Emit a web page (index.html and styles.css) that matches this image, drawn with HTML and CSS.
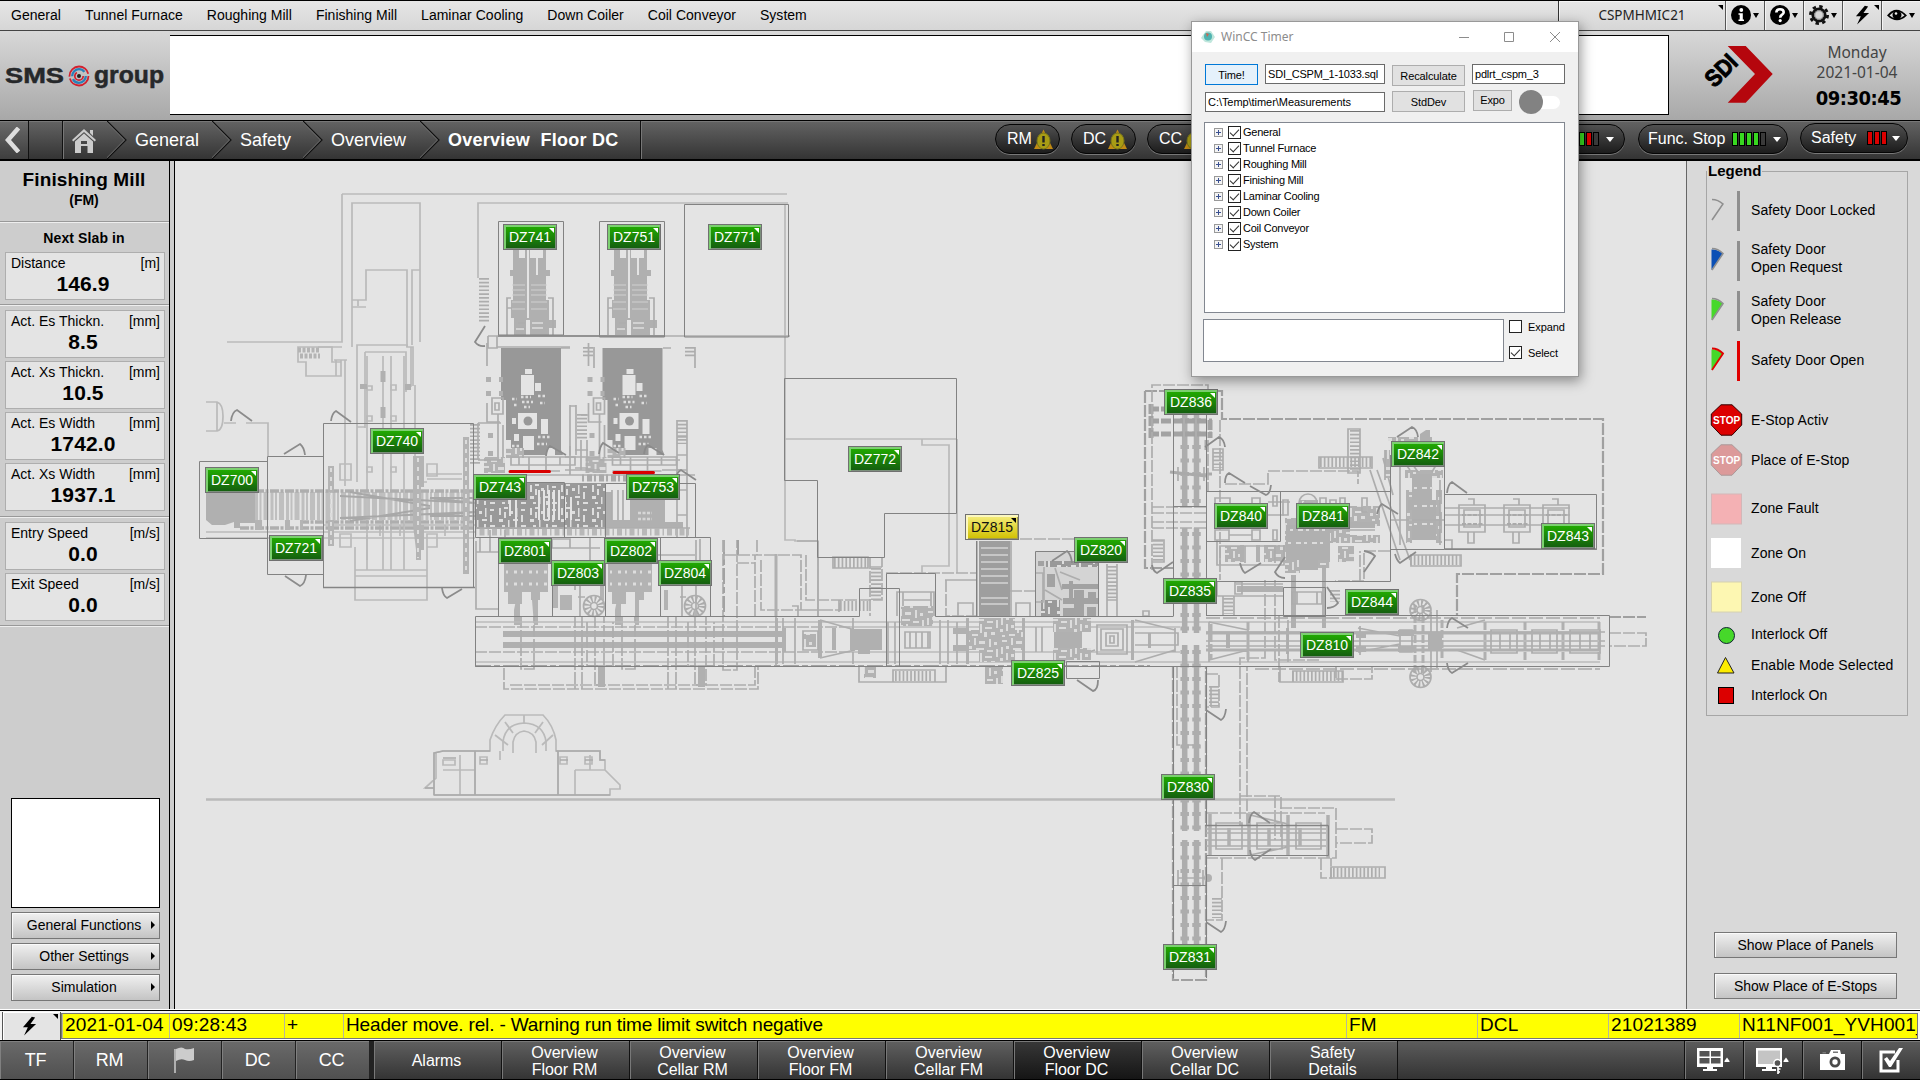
FILE: index.html
```html
<!DOCTYPE html>
<html lang="en">
<head>
<meta charset="utf-8">
<title>Overview Floor DC</title>
<link rel="stylesheet" href="styles.css">
</head>
<body>
<svg class="defs" width="0" height="0" aria-hidden="true">
  <defs>
    <symbol id="bolt" viewBox="0 0 16 20"><path d="M10.500 0L1 11.300H6.200L2.200 20L15 7.800H9L14 .8Z"/></symbol>
    <symbol id="tri-warn" viewBox="0 0 19 21"><path d="M9.500 .5L19 20H0Z" fill="#c08a14"/><ellipse cx="9.500" cy="12" rx="6.500" ry="8" fill="#a89c14" stroke="#77741a"/><path d="M9.500 7V13.500M9.500 15V17" stroke="#222" stroke-width="2.400"/></symbol>
  </defs>
</svg>
<div class="screen">
  <nav class="menubar">
    <div class="menu">
      <span>General</span><span>Tunnel Furnace</span><span>Roughing Mill</span><span>Finishing Mill</span><span>Laminar Cooling</span><span>Down Coiler</span><span>Coil Conveyor</span><span>System</span>
    </div>
    <div class="tools">
      <div class="tool host">CSPMHMIC21<i class="corner"></i></div>
      <div class="tool"><svg width="20" height="20" viewBox="0 0 20 20"><circle cx="10" cy="10" r="10"/><circle cx="10.300" cy="5" r="1.900" fill="#fff"/><path d="M7.500 8.200H11.800V14.500H13V16H7.500V14.500H8.700V9.700H7.500Z" fill="#fff"/></svg><i class="caret"></i></div>
      <div class="tool"><svg width="20" height="20" viewBox="0 0 20 20"><circle cx="10" cy="10" r="10"/><path d="M6.300 7.500Q6.500 4.300 10 4.300Q13.700 4.300 13.700 7.300Q13.700 9 11.700 10Q10.200 10.800 10.200 12.800" fill="none" stroke="#fff" stroke-width="2.600"/><circle cx="10.200" cy="15.600" r="1.600" fill="#fff"/></svg><i class="caret"></i></div>
      <div class="tool"><svg width="20" height="20" viewBox="0 0 20 20"><circle cx="10" cy="10" r="8.600" fill="none" stroke="#111" stroke-width="2.800" stroke-dasharray="3.400 3.350"/><circle cx="10" cy="10" r="6.200" fill="#d6d6d6" stroke="#111" stroke-width="2.800"/><circle cx="10" cy="10" r="4.300" fill="none" stroke="#888" stroke-width="1"/></svg><i class="caret"></i></div>
      <div class="tool"><svg class="ic" width="15" height="20"><use href="#bolt"/></svg><i class="corner"></i></div>
      <div class="tool"><svg width="20" height="14" viewBox="0 0 20 14"><path d="M0 7.500Q9 -4 20 7.500Q10 17 0 7.500Z"/><path d="M2.500 7.500Q10 -.5 17.500 7.500Q10 14 2.500 7.500Z" fill="#e0e0e0"/><circle cx="10" cy="7" r="4.500"/><circle cx="9" cy="5.500" r="1.300" fill="#eee"/></svg><i class="caret"></i></div>
    </div>
  </nav>

  <header class="head">
    <div class="brand">
      <svg width="168" height="40" viewBox="0 0 168 40">
        <g font-family="Liberation Sans" font-weight="bold" fill="#26282a" stroke="#26282a" stroke-width=".5"><text x="5" y="29" font-size="22" textLength="59" lengthAdjust="spacingAndGlyphs">SMS</text><text x="94" y="29" font-size="23.500" textLength="70" lengthAdjust="spacingAndGlyphs">group</text></g>
        <g fill="none"><circle cx="79" cy="22" r="9.500" stroke="#d3202e" stroke-width="1.800" stroke-dasharray="27 2 28 2.700"/><circle cx="79" cy="22" r="6.800" stroke="#2a80b8" stroke-width="2.300" stroke-dasharray="18 3 17 5"/><circle cx="79" cy="22" r="4.200" stroke="#d3202e" stroke-width="1.700" stroke-dasharray="17 9"/></g><circle cx="79" cy="22" r="2" fill="#222"/>
      </svg>
    </div>
    <div class="message"></div>
    <div class="customer">
      <svg width="110" height="80" viewBox="1690 35 110 80">
        <path d="M1727.700 46H1745.700L1772.700 74L1745.700 102.700H1727.700L1755 74Z" fill="#b5060d"/>
        <text transform="translate(1714.500 88.500) rotate(-45)" font-family="Liberation Sans" font-weight="bold" font-size="24" stroke="#000" stroke-width="1" textLength="35" lengthAdjust="spacingAndGlyphs">SDI</text>
      </svg>
    </div>
    <div class="clock"><span>Monday</span><span>2021-01-04</span><b>09:30:45</b></div>
  </header>

  <div class="crumbs">
    <div class="back"><svg width="16" height="26" viewBox="0 0 16 26"><path d="M14.500 1L4 13L14.500 25" fill="none" stroke="#ddd" stroke-width="4.500"/></svg></div>
    <div class="fwd"></div>
    <div class="crumb home"><svg width="26" height="26" viewBox="0 0 26 26" fill="#ccc"><path d="M1 12L13 1L25 12L23.700 13.500L13 4L2.300 13.500Z"/><path d="M19 2H22V8L19 5Z"/><path d="M4 13.500L13 5.500L22 13.500V25H16.500V18H10V25H4ZM10 13V16H16V13Z" fill-rule="evenodd"/></svg><svg class="sep" width="21" height="38"><path d="M0 0L19 19L0 38"/></svg></div>
    <div class="crumb c1">General<svg class="sep" width="21" height="38"><path d="M0 0L19 19L0 38"/></svg></div>
    <div class="crumb c2">Safety<svg class="sep" width="21" height="38"><path d="M0 0L19 19L0 38"/></svg></div>
    <div class="crumb c3">Overview<svg class="sep" width="21" height="38"><path d="M0 0L19 19L0 38"/></svg></div>
    <div class="crumb here">Overview&nbsp; Floor DC</div>
    <div class="pills">
      <div class="pill area">RM<svg width="19" height="21"><use href="#tri-warn"/></svg></div>
      <div class="pill area">DC<svg width="19" height="21"><use href="#tri-warn"/></svg></div>
      <div class="pill area">CC<svg width="19" height="21"><use href="#tri-warn"/></svg></div>
      <div class="pill estop"><span class="lamps"><i class="r"></i><i class="g"></i><i class="r"></i><i></i></span><i class="caret w"></i></div>
      <div class="pill func">Func. Stop<span class="lamps"><i class="g"></i><i class="g"></i><i class="g"></i><i class="g"></i><i></i></span><i class="caret w"></i></div>
      <div class="pill safe">Safety<span class="lamps"><i class="r"></i><i class="r"></i><i class="r"></i></span><i class="caret w"></i></div>
    </div>
  </div>

  <main class="main">
    <aside class="side">
      <div class="unit"><b>Finishing Mill</b><small>(FM)</small></div>
      <section class="grp first">
        <h3>Next Slab in</h3>
        <div class="val"><p><span>Distance</span><span>[m]</span></p><b>146.9</b></div>
      </section>
      <section class="grp tight">
        <div class="val"><p><span>Act. Es Thickn.</span><span>[mm]</span></p><b>8.5</b></div>
        <div class="val"><p><span>Act. Xs Thickn.</span><span>[mm]</span></p><b>10.5</b></div>
        <div class="val"><p><span>Act. Es Width</span><span>[mm]</span></p><b>1742.0</b></div>
        <div class="val"><p><span>Act. Xs Width</span><span>[mm]</span></p><b>1937.1</b></div>
      </section>
      <section class="grp last">
        <div class="val"><p><span>Entry Speed</span><span>[m/s]</span></p><b>0.0</b></div>
        <div class="val"><p><span>Exit Speed</span><span>[m/s]</span></p><b>0.0</b></div>
      </section>
      <div class="sidefoot">
        <div class="preview"></div>
        <div class="btn">General Functions<i class="rt"></i></div>
        <div class="btn">Other Settings<i class="rt"></i></div>
        <div class="btn">Simulation<i class="rt"></i></div>
      </div>
    </aside>

    <div class="plan">
      <svg class="floor" width="1511" height="848" viewBox="175 161 1511 848">
        <defs>
          <pattern id="mesh" width="37" height="29" patternUnits="userSpaceOnUse"><rect width="37" height="29" fill="#b2b2b2"/><path d="M3 2H8V4H3ZM12 0H14V7H12ZM17 3H23V6H17ZM27 1H29V9H27ZM32 4H35V7H32ZM2 9H4V16H2ZM7 8H10V11H7ZM14 10H22V12H14ZM25 12H31V14H25ZM34 11H36V19H34ZM7 15H9V22H7ZM12 16H15V19H12ZM18 15H20V24H18ZM23 18H30V20H23ZM1 20H4V23H1ZM10 25H16V27H10ZM22 23H25V28H22ZM29 23H33V26H29ZM3 26H6V28H3Z" fill="#dcdcdc"/></pattern>
          <pattern id="meshd" width="31" height="23" patternUnits="userSpaceOnUse"><rect width="31" height="23" fill="#999"/><path d="M3 2H5V9H3ZM8 1H12V3H8ZM8 6H10V12H8ZM14 5H17V8H14ZM20 2H21.500V11H20ZM25 3H29V5H25ZM3 13H7V16H3ZM12 14H13.500V21H12ZM17 13H22V15H17ZM25 9H27V16H25ZM6 19H9V21H6ZM19 18H21V22H19ZM25 19H30V21H25Z" fill="#dedede"/></pattern>
          <g id="stand">
            <path class="f" d="M513 250V270H510V276H513V300H511V318H514V335H526V320H530V335H549V328H556V320H549V300H546V276H550V270H546V250H543V258H530V250H525V258H519V250Z"/>
            <path d="M512 285H525M531 285H547M512 290H525M531 290H547M512 295H525M531 295H547M512 302H525M531 302H547M512 309H525M531 309H547" stroke="#d0d0d0" stroke-width="1.200"/><path d="M528 250V318M537 252V275" stroke="#e4e4e4" stroke-width="2"/>
            <path class="m" d="M507 335V298H511M553 335V298H548M507 308H512M518 328H525M518 323H525"/><path d="M532 323H543M532 328H543M516 329H524" stroke="#ddd" stroke-width="1.500"/>
          </g>
          <g id="motor">
            <path class="d" d="M501 348H561V380H561V450L563 455H555V448H547V455H511V440H506V400H501Z"/>
            <path d="M521 375H534V395H521ZM525 369H532V374H525ZM535 383H541V391H535ZM518 413H537V429H518ZM541 419H548V434H541ZM523 436H534V450H523ZM512 418H516V424H512ZM514 434H519V441H514Z" fill="#e4e4e4"/>
            <path d="M512 399H517M521 397H531M538 396H546M514 405H518M522 402H533M524 407H530M540 403H545M538 437H550M512 446H521M537 444H547" stroke="#ddd" stroke-width="2.500" stroke-dasharray="2.500 2"/>
            <circle class="d" cx="528" cy="421" r="4.500"/>
            <path class="f" d="M486 377H491V382H486ZM499 377H503V382H499ZM486 391H491V396H486ZM499 391H503V396H499ZM488 433H493V438H488ZM488 451H493V456H488Z"/>
            <path class="m" d="M492 398H503V414H492ZM495 403H499V410H495ZM487 343V366M498 414V470M503 425V470M487 403V422H500"/>
            <path d="M484 457H505V473H484ZM506 448H524V458H506Z" fill="url(#mesh)"/><path class="m" d="M511 457H575V465H511ZM519 457V465M529 457V471M546 457V471M560 457V465M511 471H560"/>
          </g>
          <g id="rollbox"><path class="m" d="M0 0H26V27H0ZM5 5H21V22H5ZM9 -6H15V0M9 27V38H15V27"/><path d="M3 10H24M3 19H24" stroke="#aaa" stroke-width="2" stroke-dasharray="4 1.500"/></g>
          <g id="spiral"><circle class="m" r="10.500"/><circle r="7" fill="none" stroke="#ababab" stroke-width="6" stroke-dasharray="1.700 2"/><circle class="m" r="3.500"/></g>
        </defs>

        <!-- building walls -->
        <g class="l">
          <path d="M342 194H787M342 194V342H227M352 347V203H420V342M352 306V300H366V270H407V347M412 345V270H420M352 300V307H366M358 300V306M342 347H318M478 278V203H788M785 204V540H795V541H818V616M785 439H957M922 439V445H949V566H922V573M957 439V573"/>
          <path d="M318 347H332V362H341V376H336V360H347M336 360H341V376H306V362H298V347H318M334 360H345V486M357 482V345H407V347H413V386M365 352H406V392M365 352V428M367 356V560M383 356V570M391 356V570M404 356V570M357 427H365M411 347V386H406M415 385V423M415 423V482H427"/>
          <path d="M206 402H217Q223 404 223 416Q223 430 217 431H206M217 402V431M224 423H236M246 423H268V456"/>
          <path d="M355 547V600H427V547M355 570H427M355 576H427M367 570V535M340 464H351V480H340ZM340 534H351V547H340ZM427 464H437V476H427ZM427 534H437V547H427ZM427 474H462M427 479H462M372 386H367V390H372ZM391 385H396V390H391ZM391 416H396V421H391ZM372 416H367V421H372ZM367 467H372V472H367ZM391 467H396V472H391Z"/>
          <path d="M206 532H475M206 538H475M323 525H475M380 525V536M400 525V536M420 525V536M445 525V536"/>
          <path d="M206 799.500H1395" stroke-width="2.500"/>
          <path d="M434 795V753L443 751H490V740Q495 725 505 715H543Q553 725 556 740V751H600V760H605V770L620 785V789H610V795ZM436 752V778L425 788H434M503 751V742Q505 724 524 723Q544 724 546 742V751M513 753V742Q515 732 524 731Q534 732 536 742V753M443 770H475M460 755V795M475 751V795M500 760V751M558 751V795M575 770V795M575 770H605M590 755V770M443 760H455V765H443ZM480 757H487V764H480ZM560 757H567V764H560ZM585 757H592V764H585Z"/>
          <path d="M495 735L508 745M505 722L513 733M524 715V723M543 722L535 733M553 735L542 745" stroke-width="1.800"/>
        </g>
        <path d="M434 795V753L443 751H490M556 751H600V760H605M425 788H434M443 758H456M480 760H488M560 760H568M585 760H593M434 795H610M475 751V795M558 751V795" stroke="#aaa" stroke-width="1.500" fill="none"/>
        <path d="M298 350H320M300 356H320" stroke="#b4b4b4" stroke-width="5" stroke-dasharray="3 1.500"/><path d="M383 371V382M383 407V418" stroke="#b0b0b0" stroke-width="5"/><path class="f" d="M360 384H367V389H360ZM405 384H411V390H405Z"/>

        <!-- entry roller table -->
        <path class="f" d="M206 492H255V523H240V528H234V522L225 525H212L206 520Z"/>
        <path d="M255 506H475" stroke="#bfbfbf" stroke-width="28" stroke-dasharray="3 1.500 2 2 5 2"/>
        <path d="M255 491H475M300 522H475M240 528H475" stroke="#aeaeae" stroke-width="3.500" stroke-dasharray="9 1.500 3 1.500"/>
        <path d="M340 496L475 503L430 498H475M340 518L475 512L430 516H475M350 492L430 506M350 521L430 508" fill="none" stroke="#a8a8a8" stroke-width="2"/>
        <path d="M413 456H424V487H413ZM413 487H421V525H413ZM413 525H424V550H421V560H416V550ZM463 437H469V490H463ZM463 490H469V523H463ZM463 523H469V574H463ZM328 466H334V492H328ZM328 520H334V546H328ZM255 520H262V530H255ZM285 520H290V530H285ZM300 520H303V530H300Z" fill="#b4b4b4"/>
        <path d="M418 458V558M466 440V572M331 468V545" stroke="#dcdcdc" stroke-width="2" stroke-dasharray="4 5"/>

        <!-- drives and mill stands -->
        <use href="#stand"/><use href="#stand" x="101"/>
        <use href="#motor"/><use href="#motor" x="101.500"/>
        <path d="M484 278V323" class="stair"/><path d="M588 347V358M690 347V358" class="stair"/>
        <path d="M682 420V444" class="stair"/><path class="m" d="M570 405V455M576 405V455M570 406H576M581 415H588M677 420V538M687 420V538M677 437H687M677 455H687M677 470H687M677 490H687M677 515H687M581 440V470M587 440V470M575 450H588M575 468H588M594 347V368M695 347V368M561 348H570M663 348H671"/>
        <path d="M582 414V440M475 424V465" class="stair"/>
        <path class="m" d="M478 423H501M478 423V460M475 475H695M475 482H505M488 336H790M497 347H570M488 336V348H497V336M565 470H600M662 470H680M478 460H500M565 457H600M600 460H680M570 446V475"/>
        <path d="M582 478H628M475 478H500M645 478H675" stroke="#aaa" stroke-width="7" stroke-dasharray="2 3 5 2"/>
        <rect x="475" y="483" width="130" height="46" fill="url(#meshd)"/>
        <path d="M510 487V516M516 487V525M539 490V520M544 490V520M549 490V520M554 490V520M559 490V520M565 497V520M571 497V520" stroke="#e4e4e4" stroke-width="2"/>
        <path class="f" d="M635 500H665V522H683V528H605V492H612V520H630V500Z"/><path class="m" d="M612 490V520M618 490V520M623 490V520"/><path d="M638 513H652M638 519H652" stroke="#d6d6d6" stroke-width="2.500" stroke-dasharray="3 1.500"/>
        <path d="M475 532H690" stroke="#b8b8b8" stroke-width="7" stroke-dasharray="1.500 3 5 3"/>
        <path class="m" d="M475 528H690M480 537V552H498M490 530V552M505 530V538M476 541V609H498M476 552H498M552 539H570V548H552ZM552 548H600M590 537V560M640 555H695M700 539V560M696 540V616"/>
        <g fill="#b3b3b3"><path d="M504 563H548V592H540V600H531V592H522V604H508V592H504ZM608 563H652V592H644V600H635V592H626V604H612V592H608ZM560 595H572V610H560ZM553 563H558V608H553ZM664 590H668V610H664ZM600 563H604V600H600Z"/><path d="M516 600H520V625H514V610ZM532 600H538V625H534ZM617 600H621V625H615V610ZM633 600H639V625H635Z"/></g>
        <path d="M506 572H549M610 572H653M506 584H549M610 584H653" stroke="#dedede" stroke-width="3" stroke-dasharray="2 6 3 4"/>
        <path d="M524 592V616M629 592V616M528 592V616M633 592V616" stroke="#e4e4e4" stroke-width="4"/>
        <use href="#spiral" x="594" y="606"/><use href="#spiral" x="695" y="606"/>
        <path class="m" d="M580 565V616M575 563V590M682 565V616M556 570H600M664 575H690M578 597H585M680 597H686"/>

        <!-- main strip line -->
        <path d="M503 634H782M503 645H782" stroke="#b0b0b0" stroke-width="6"/>
        <path d="M521 616V669H534V616M622 616V669H635V616" fill="#e4e4e4" class="m dash"/>
        <g class="m">
          <path d="M475 627H850M475 652H850" class="dash"/><path d="M850 627H1180M850 652H1180M475 622H1600M475 662H1600" class="l"/>
          <path d="M595 616V685H604V616M695 616V685H706V616M582 616V689M575 616V689M668 616V689M676 616V689M587 622V666H613V622M688 622V666H714V622" class="dash"/>
          <path d="M820 620L855 630M820 658L855 650M776 616V666M783 618V664M795 618V664M853 618V664M1065 660L1095 650M1135 620L1175 630M1135 662L1175 650M940 620V664M948 620V664M1023 620V664M1175 628V652M1209 622L1248 630M1209 660L1248 650M1248 622V662M1209 622V662M910 632V648M916 632V648M922 632V648M928 632V648M1036 627V652M1042 627V652M888 622V664M895 622V664M957 622V664M1060 618V664"/>
          <path d="M504 668V689H758V666M510 685H755V667M723 540V670H737V540" class="dash"/>
        </g>
        <path d="M475 666H1150M724 540V616M738 540V555" stroke="#a2a2a2" stroke-width="2" stroke-dasharray="16 3 6 3"/>
        <g class="f"><path d="M782 628H786V652H782ZM775 618H778V664H775ZM818 620H822V658H818ZM850 629H882V650H870V654H858V650H850ZM832 628H836V650H832ZM953 628H966V634H953ZM953 645H966V651H953ZM981 625H1014V655H981ZM1054 632H1068V648H1054ZM1068 625H1082V654H1068ZM1131 620H1134V660H1131ZM1148 633H1151V648H1148ZM1286 628H1289V654H1286ZM1226 634H1230V648H1226ZM598 665H605V687H598ZM698 665H705V687H698ZM966 618H969V664H966ZM1022 618H1025V664H1022Z"/></g>
        <g fill="url(#mesh)"><rect x="969" y="630" width="54" height="20"/><rect x="979" y="618" width="36" height="44"/><rect x="1053" y="618" width="38" height="14"/><rect x="1053" y="648" width="38" height="12"/><rect x="901" y="606" width="32" height="20"/><rect x="985" y="666" width="18" height="18"/><rect x="864" y="667" width="12" height="11"/><rect x="803" y="634" width="13" height="13"/></g>
        <path class="m" d="M1097 625H1127V654H1097ZM1101 629H1123V650H1101ZM1106 633H1118V646H1106ZM1110 636H1114V643H1110ZM905 632H930V648H905ZM1135 633H1178V645H1135M897 616V592H934V616M903 592V606M931 592V606M904 600H931M859 666V682H946V666M803 631H818V650H803ZM893 670H935V682H893Z"/>
        <path d="M895 676H933" class="stair"/>

        <!-- side rooms between stands and coilers -->
        <g class="m dash"><path d="M755 616V555H801V610H840V600M761 560V610H825M724 555H755M737 563H755M724 540V560M757 540V555M806 555V600H882V557M839 600V612M870 557V616M946 580V616H976M952 580H976M1020 539H1074M1010 591H1036M945 580H976M886 573H976"/></g>
        <path class="m" d="M776 554V616M818 541V616M797 541H818M792 606H798V616M958 616V603H973V616M1016 616V603H1030V616M977 541V616M1011 541V616M833 557H868V568H833ZM870 567H882M870 580H882M870 592H882"/>
        <path d="M776 554V616" stroke="#b0b0b0" stroke-width="3"/>
        <path d="M834 563H867M840 606H870" class="stair"/><path d="M876 568V600M1112 566V600" class="stair"/>
        <rect x="979" y="541" width="31" height="75" fill="#9e9e9e"/><path d="M981 548H1008M981 555H1008M981 562H1008M981 569H1008M981 576H1008M981 583H1008M981 598H1008M981 604H1008" stroke="#d4d4d4" stroke-width="1.500"/>
        <rect x="1036" y="552" width="63" height="64" fill="#d4d4d4"/>
        <path d="M1046 561H1098V567H1046ZM1041 600H1060V616H1041Z" fill="url(#meshd)"/><path d="M1047 574H1055V587H1047ZM1062 584H1098V589H1062ZM1063 598H1098V604H1063ZM1074 590H1084V616H1063V608H1074ZM1069 581H1073V600H1069ZM1088 592H1096V602H1088ZM1087 607H1096V616H1087ZM1038 561H1044V566H1038Z" fill="#a2a2a2"/><path class="m" d="M1036 573H1043V602H1036M1045 590L1062 600M1060 572L1080 580M1055 568L1062 590M1107 564V616M1117 564V616M1107 600H1117M1143 611H1149V616H1143ZM1044 567V600"/>

        <!-- coil conveyor, vertical legs -->
        <g stroke="#adadad" fill="none"><path d="M1184.700 415V506M1196.500 415V506M1184.700 528V633M1196.500 528V633M1184.700 645V831M1196.500 645V831M1184.700 840V948M1196.500 840V948" stroke-width="5.500"/><path d="M1184.700 418V506M1196.500 418V506M1184.700 532V633M1196.500 532V633M1184.700 650V831M1196.500 650V831M1184.700 842V948M1196.500 842V948" stroke-width="8.500" stroke-dasharray="4 9.500"/></g>
        <path d="M1149 409H1166M1149 421H1212M1149 434H1212M1151 404V438M1210 420V438" stroke="#a2a2a2" stroke-width="5" stroke-dasharray="10 2"/>
        <g class="md dash"><path d="M1145 391H1222V419H1603V574H1457V616M1145 391V568H1173M1609 617H1646M1173 666V980H1206V666"/></g>
        <g class="m dash"><path d="M1152 570V385H1208V395M1152 507H1206M1152 513H1206M1152 522H1206M1152 528H1206M1208 440V492M1220 420V580M1225 484H1268V471H1358V484M1609 633H1646V646H1609M1265 580V658H1240V825M1247 825V666M1275 580V660H1320M1279 616V682M1360 581V551M1390 551H1364V581H1335M1336 679H1372V666M1336 666V679M1177 666V745H1200M1206 674H1219V707H1206M1240 796H1281V840M1275 796V840M1280 808H1336V858H1206M1206 813H1325M1336 829H1372V843H1336M1321 858V878H1331V858M1222 858V920H1206"/></g>
        <path d="M1158 540V562M1218 452V468M1214 686V706M1217 898V918M1355 430V472M1228 598V614M1335 590V602" class="stair"/><path d="M1320 462H1372M1410 560H1460M1292 676H1343M1333 872.500H1380" class="stair"/>
        <path class="m" d="M1152 540H1164V562H1152M1348 429H1360V473H1348ZM1319 457H1372V468H1319ZM1370 470L1400 560M1377 470L1410 560M1383 458L1393 495M1411 555H1461V566H1411ZM1280 667V682H1343M1206 596H1283M1217 581V596M1223 596V616M1234 596V616M1213 449V470H1223V449ZM1211 686V707M1331 867H1385V878H1331ZM1293 671H1343V682H1293ZM1178 467V481M1204 467V481M1178 474H1210M1236 584H1283"/>
        <path d="M1206 440V450M1208 474H1212M1170 472L1206 476" stroke="#aaa" stroke-width="3"/>
        <!-- coilers -->
        <path d="M1285 518H1300V500H1318V512H1348V506H1380V526H1350V535H1380V543H1330V568H1300V573H1285ZM1225 546H1240V562H1225ZM1264 545H1285V562H1264ZM1338 546H1354V562H1338ZM1405 470H1443V478H1405ZM1406 490H1412V543H1406ZM1436 490H1442V543H1436ZM1388 437H1432V441H1388ZM1385 450H1390V478H1385Z" fill="url(#mesh)"/>
        <path class="f" d="M1286 525H1330V560H1318V570H1300V560H1286ZM1412 474H1432V500H1436V540H1412V510H1408V500H1412ZM1420 434L1426 430H1430V442H1420ZM1237 586H1283V592H1237ZM1291 575H1296V628H1291ZM1322 565H1326V628H1322ZM1240 545H1244V562H1240ZM1256 545H1260V562H1256ZM1350 522H1375V528H1350Z"/>
        <path d="M1290 530H1325M1288 543H1326M1414 488H1434M1414 506H1434M1414 524H1434" stroke="#dcdcdc" stroke-width="2" stroke-dasharray="3 5 5 3"/>
        <circle class="m" cx="1308" cy="503" r="9"/><path class="m" d="M1303 503H1313M1305 500V506M1283 500H1288V515H1283ZM1320 498H1326V512H1320ZM1330 500H1336V512H1330ZM1340 498H1345V512H1340ZM1362 498H1367V512H1362Z"/>
        <path class="m" d="M1215 498H1230V505H1215ZM1252 498H1260V506H1252ZM1273 496H1277V506H1273ZM1273 530H1277V540H1273ZM1215 530H1229V540H1215ZM1252 530H1260V540H1252ZM1229 535H1252M1220 546H1284V565H1220ZM1235 582H1242V594H1235ZM1292 592H1322V604H1292ZM1297 592V604M1317 592V604M1268 502H1290M1268 515H1284M1445 508H1570M1445 515H1570M1445 525H1570M1400 455V545M1440 480V545M1390 520H1445M1385 450V480M1395 450L1410 470M1445 540H1452V549M1217 540V565H1250M1408 458L1418 472M1440 458L1432 472M1347 530L1375 530M1245 546V563M1275 546V563"/>
        <use href="#rollbox" x="1459" y="505"/><use href="#rollbox" x="1504" y="505"/><use href="#rollbox" x="1543" y="505"/>
        <!-- tail section -->
        <path class="m" d="M1206 632H1605M1206 646H1605M1206 641H1605M1358 628L1400 636M1358 652L1400 644M1360 626V655M1457 628L1485 620M1457 650L1485 660M1491 630H1517V653H1491ZM1532 630H1557V653H1532ZM1570 630H1600V653H1570ZM1500 633H1510V650H1500ZM1540 633H1550V650H1540ZM1580 633H1590V650H1580ZM1437 610V668M1431 612V672M1288 620V662M1400 630H1412V652H1400Z"/>
        <path d="M1206 633H1600M1206 650H1600" stroke="#b0b0b0" stroke-width="3"/>
        <path d="M1485 622V662M1525 622V662M1563 622V662M1599 622V662M1415 605V675M1423 605V675M1442 620V660M1248 622V662M1211 624V660" stroke="#b0b0b0" stroke-width="3" stroke-dasharray="8 2"/>
        <use href="#spiral" x="1420.500" y="610"/><use href="#spiral" x="1420.500" y="677"/>
        <path d="M1356 632H1366V638H1356ZM1356 646H1366V652H1356ZM1398 630H1414V636H1398ZM1398 646H1414V652H1398ZM1428 632H1442V650H1428Z" fill="#b0b0b0"/>
        <path d="M1206 618H1600M1255 669H1600" stroke="#a6a6a6" stroke-width="1.500" stroke-dasharray="14 3"/>
        <!-- spur -->
        <path class="m" d="M1206 829H1326M1206 833H1326M1206 840H1326M1206 846H1326M1216 823H1242V849H1216ZM1257 823H1282V849H1257ZM1296 823H1321V849H1296ZM1178 878H1205M1178 870V885M1203 870V885M1250 815L1288 824M1250 855L1288 847"/>
        <path d="M1210 814V855M1229 828V846M1269 828V846M1288 815V855M1300 828V846M1328 815V858M1249 814V855" stroke="#b0b0b0" stroke-width="3.500"/>
        <circle class="f" cx="1208" cy="878" r="4"/>

        <!-- zone outlines -->
        <g class="z">
          <path d="M498.500 335V221.500H563.500V335ZM599.500 337V221.500H664.500V337ZM684.500 337V204.500H788.500V337ZM199.500 461.500H267.500V538.500H199.500ZM267.500 456.500H323.500V574.500H267.500ZM323.500 423.500H473.500V587.500H323.500ZM475.500 482.500H564.500V537.500H475.500ZM605.500 483.500H695.500V537.500H605.500ZM498.500 537.500H710.500V616.500M498.500 537.500V616.500M552.500 560V616.500M605.500 537.500V616.500M660.500 537.500V616.500"/>
          <path d="M784.500 378.500H956.500V513.500H884.500V557.500H817.500V480.500H784.500ZM475.500 616.500H859.500V588.500H899.500V666.500M886.500 666.500V573.500H935.500V616.500H1173.500M475.500 616.500V666.500H1609.500V615.500H1206.500M976.500 541V616M1035.500 551.500H1098.500V616.500H1035.500ZM1066.500 661.500H1099.500V678.500H1066.500Z"/>
          <path d="M1173.500 414V616M1206.500 414V616M1173.500 506.500H1206.500M1173.500 666V978M1206.500 666V825.500H1328.500V855.500H1206.500V978M1173.500 885.500H1206.500M1206.500 491.500H1390.500V581.500H1206.500ZM1206.500 541.500H1280.500V491.500M1390.500 455V549.500H1444.500V455M1444.500 494.500H1596.500V549.500H1444.500M1283.500 587.500H1325.500V616.500H1283.500Z"/>
        </g>
        <path d="M323 587.500H475M1205 825.500H1328M1445 549H1597M498 336H664" stroke="#858585" stroke-width="1.500"/>
        <!-- doors -->
        <g class="door">
          <path d="M231 421Q232 412 237 410L252 421M331 421Q332 413 336 411L351 422M284 454L300 444Q304 447 305 455M285 576L300 586Q305 584 306 575M442 588Q443 596 447 598L462 589M485 326L475 342Q479 347 485 346M546 456Q547 448 550 446L566 455M599 454Q600 446 603 443L619 453M644 454Q645 447 648 445L664 455M677 474Q678 472 681 470L696 480"/>
          <path d="M1052 561L1067 551Q1071 554 1072 563M1077 680L1093 691Q1098 690 1098 680M1152 565Q1153 571 1157 573L1173 562M1205 447L1219 437Q1224 439 1225 447M1225 483Q1225 475 1229 473L1245 483M1250 486L1266 495Q1270 494 1271 485M1377 514Q1379 506 1382 504L1398 514M1397 437L1412 427Q1417 429 1418 437M1447 493Q1448 484 1452 482L1467 493M1395 554Q1397 561 1400 563L1416 552M1240 563Q1242 571 1245 573L1261 563M1285 557L1275 572Q1278 578 1285 578M1364 551Q1371 552 1375 556L1364 572M1327 587L1338 603Q1334 608 1327 608M1447 628Q1448 620 1452 618L1468 628M1447 663Q1448 671 1452 673L1468 663"/>
          <path d="M1206 710L1221 720Q1225 718 1226 709M1206 922L1221 932Q1225 930 1226 921M1249 823Q1250 814 1254 812L1270 823M1250 850Q1251 858 1255 860L1271 849"/>
        </g>
        <path d="M510 471.500H549.500M614 472.500H653.500" stroke="#d90000" stroke-width="3" stroke-linecap="round"/>
      </svg>

      <div class="dz" style="left:328px;top:63px">DZ741</div>
      <div class="dz" style="left:432px;top:63px">DZ751</div>
      <div class="dz" style="left:533px;top:63px">DZ771</div>
      <div class="dz" style="left:195px;top:267px">DZ740</div>
      <div class="dz" style="left:30px;top:306px">DZ700</div>
      <div class="dz" style="left:94px;top:374px">DZ721</div>
      <div class="dz" style="left:298px;top:313px">DZ743</div>
      <div class="dz" style="left:451px;top:313px">DZ753</div>
      <div class="dz" style="left:323px;top:377px">DZ801</div>
      <div class="dz" style="left:429px;top:377px">DZ802</div>
      <div class="dz" style="left:376px;top:399px">DZ803</div>
      <div class="dz" style="left:483px;top:399px">DZ804</div>
      <div class="dz" style="left:673px;top:285px">DZ772</div>
      <div class="dz off" style="left:790px;top:353px">DZ815</div>
      <div class="dz" style="left:899px;top:376px">DZ820</div>
      <div class="dz" style="left:836px;top:499px">DZ825</div>
      <div class="dz" style="left:989px;top:228px">DZ836</div>
      <div class="dz" style="left:988px;top:417px">DZ835</div>
      <div class="dz" style="left:1039px;top:342px">DZ840</div>
      <div class="dz" style="left:1121px;top:342px">DZ841</div>
      <div class="dz" style="left:1216px;top:280px">DZ842</div>
      <div class="dz" style="left:1366px;top:362px">DZ843</div>
      <div class="dz" style="left:1170px;top:428px">DZ844</div>
      <div class="dz" style="left:1125px;top:471px">DZ810</div>
      <div class="dz" style="left:986px;top:613px">DZ830</div>
      <div class="dz" style="left:988px;top:783px">DZ831</div>
    </div>

    <aside class="right">
      <div class="legend">
        <h2>Legend</h2>
        <div class="lg door-row"><svg width="34" height="46" viewBox="0 0 34 46"><path d="M2 12.500Q8 12.500 13 17L2 33" fill="none" stroke="#8f8f8f" stroke-width="1.600"/><path d="M28.500 4V44" class="post"/></svg><span>Safety Door Locked</span></div>
        <div class="lg door-row"><svg width="34" height="46" viewBox="0 0 34 46"><path d="M1.500 12.500Q8 12 13 17L1.500 33Z" fill="#0a4fb5"/><path d="M2 11.500Q8 11.500 13 16.500L2 33" fill="none" stroke="#8f8f8f" stroke-width="1.600"/><path d="M28.500 4V44" class="post"/></svg><span class="up">Safety Door<br>Open Request</span></div>
        <div class="lg door-row"><svg width="34" height="46" viewBox="0 0 34 46"><path d="M1.500 12.500Q8 12 13 17L1.500 33Z" fill="#46d82a"/><path d="M2 11.500Q8 11.500 13 16.500L2 33" fill="none" stroke="#8f8f8f" stroke-width="1.600"/><path d="M28.500 4V44" class="post"/></svg><span>Safety Door<br>Open Release</span></div>
        <div class="lg door-row"><svg width="34" height="46" viewBox="0 0 34 46"><path d="M1.500 12.500Q8 12 13 17L1.500 33Z" fill="#46d82a"/><path d="M2 11.500Q8 11.500 13 16.500L2 33" fill="none" stroke="#e00000" stroke-width="1.800"/><path d="M28.500 4V44" class="post red"/></svg><span>Safety Door Open</span></div>
        <div class="lg stop-row gap"><svg width="34" height="32" viewBox="0 0 34 32"><path d="M11 .8H22L31.700 10V21L22 31.200H11L1.300 21V10Z" fill="#dc0000" stroke="#300"/><text x="3" y="19.500">STOP</text></svg><span>E-Stop Activ</span></div>
        <div class="lg stop-row"><svg width="34" height="32" viewBox="0 0 34 32"><path d="M11 .8H22L31.700 10V21L22 31.200H11L1.300 21V10Z" fill="#dc9a9a" stroke="#a99"/><text x="3" y="19.500">STOP</text></svg><span>Place of E-Stop</span></div>
        <div class="lg zone-row gap7"><svg width="34" height="32"><rect x="1.500" y="1" width="30" height="30" fill="#f4b1b4" stroke="#d3b7b8"/></svg><span>Zone Fault</span></div>
        <div class="lg zone-row"><svg width="34" height="32"><rect x="1" y="1" width="30" height="30" fill="#fff"/></svg><span>Zone On</span></div>
        <div class="lg zone-row"><svg width="34" height="32"><rect x="1.500" y="1" width="30" height="30" fill="#fdf7b2" stroke="#d6d2b0"/></svg><span>Zone Off</span></div>
        <div class="lg lock-row"><svg width="34" height="20"><circle cx="16.500" cy="11.500" r="8" fill="#46d82a" stroke="#123"/></svg><span>Interlock Off</span></div>
        <div class="lg lock-row"><svg width="34" height="20"><path d="M15.500 2.500L24 18H7.500Z" fill="#fdec00" stroke="#222"/></svg><span>Enable Mode Selected</span></div>
        <div class="lg lock-row"><svg width="34" height="20"><rect x="8.500" y="2.500" width="15" height="16" fill="#dc0000" stroke="#000"/></svg><span>Interlock On</span></div>
      </div>
      <div class="rbtns"><div class="btn">Show Place of Panels</div><div class="btn">Show Place of E-Stops</div></div>
    </aside>
  </main>

  <div class="alarm">
    <div class="abolt"><svg class="ic" width="15" height="20"><use href="#bolt"/></svg><i class="corner"></i></div>
    <div class="arow"><span class="a1">2021-01-04</span><span class="a2">09:28:43</span><span class="a3">+</span><span class="a4">Header move. rel. - Warning run time limit switch negative</span><span class="a5">FM</span><span class="a5">DCL</span><span class="a5">21021389</span><span class="a6">N11NF001_YVH001_</span></div>
  </div>

  <footer class="foot">
    <div class="areas"><span>TF</span><span>RM</span><span><svg width="20" height="26" viewBox="0 0 20 26"><path d="M1 2V26" stroke="#ccc" stroke-width="1.500"/><path d="M2 2Q8 -1 11 2Q15 3 20 1V13Q15 15 11 13Q7 11 2 14Z" fill="#ccc"/></svg></span><span>DC</span><span>CC</span></div>
    <div class="tabs"><span>Alarms</span><span>Overview<br>Floor RM</span><span>Overview<br>Cellar RM</span><span>Overview<br>Floor FM</span><span>Overview<br>Cellar FM</span><span class="on">Overview<br>Floor DC</span><span>Overview<br>Cellar DC</span><span>Safety<br>Details</span></div>
    <div class="fill"></div>
    <div class="ficons">
      <span><svg width="34" height="24" viewBox="0 0 34 24"><path d="M0 0H26V19H0Z" fill="#fff"/><path d="M2.500 3H12.500V8.500H2.500ZM14 3H23.500V8.500H14ZM2.500 10H12.500V15.500H2.500ZM14 10H23.500V15.500H14Z" fill="#555"/><path d="M10 19H16V21H20V23H6V21H10Z" fill="#fff"/><path d="M27.500 13L30 9.500L32.500 13V14H27.500Z" fill="#fff"/></svg></span>
      <span><svg width="34" height="28" viewBox="0 -2 34 28"><path d="M0 0H26V19H0Z" fill="#fff"/><path d="M2 2.500H24V16H2Z" fill="#c4c4c4"/><path d="M10 19H16V21H20V23H6V21H10Z" fill="#fff"/><circle cx="21.500" cy="15" r="3.600" fill="#555" stroke="#fff" stroke-width="1.500"/><path d="M22 18V26M22 21H24.500M22 24H24" stroke="#fff" stroke-width="1.700"/><path d="M27.500 13L30 9.500L32.500 13V14H27.500Z" fill="#fff"/></svg></span>
      <span><svg width="25" height="20" viewBox="0 0 25 20"><path d="M0 4H9L11 0H20L21 4H25V20H0Z" fill="#fff"/><circle cx="15" cy="12" r="5.500" fill="#4a4a4a"/><circle cx="15" cy="12" r="2.700" fill="#fff"/><path d="M13 1.500H18V3H13ZM2.500 2H6V3.500H2.500Z" fill="#777"/></svg></span>
      <span><svg width="26" height="26" viewBox="0 0 26 26"><path d="M17 5H3V24H20V13" fill="none" stroke="#fff" stroke-width="3"/><path d="M6 12L9 10L12 14L21 1H25L13 20H11Z" fill="#fff"/></svg></span>
    </div>
  </footer>
</div>

<div class="win">
  <div class="wtitle"><svg width="14" height="14" viewBox="0 0 14 14"><path d="M2 5L5 1L10 1L14 7L10 13L4 12L0 8Z" fill="#bfe6dc"/><circle cx="7" cy="6.500" r="4" fill="#4fb3b0"/><path d="M5 3L8 4L6 7Z" fill="#d0644c"/></svg><span>WinCC Timer</span><svg class="ctl" width="104" height="12" viewBox="0 0 104 12"><path d="M0 6.500H10M45.500 1.500H54.500V10.500H45.500ZM91 1L101 11M101 1L91 11" fill="none" stroke="#8c8c8c"/></svg></div>
  <div class="wbody">
    <div class="wrow one"><div class="wb go">Time!</div><div class="inp sql">SDI_CSPM_1-1033.sql</div><div class="wb rec">Recalculate</div><div class="inp db">pdlrt_cspm_3</div></div>
    <div class="wrow two"><div class="inp path">C:\Temp\timer\Measurements</div><div class="wb std">StdDev</div><div class="wb expo">Expo</div><div class="toggle"><i></i></div></div>
    <div class="tree">
      <div><i class="plus"></i><i class="cb on"></i><span>General</span></div>
      <div><i class="plus"></i><i class="cb on"></i><span>Tunnel Furnace</span></div>
      <div><i class="plus"></i><i class="cb on"></i><span>Roughing Mill</span></div>
      <div><i class="plus"></i><i class="cb on"></i><span>Finishing Mill</span></div>
      <div><i class="plus"></i><i class="cb on"></i><span>Laminar Cooling</span></div>
      <div><i class="plus"></i><i class="cb on"></i><span>Down Coiler</span></div>
      <div><i class="plus"></i><i class="cb on"></i><span>Coil Conveyor</span></div>
      <div><i class="plus"></i><i class="cb on"></i><span>System</span></div>
    </div>
    <div class="wfoot"><div class="log"></div><div class="opts"><div><i class="cb"></i>Expand</div><div><i class="cb on"></i>Select</div></div></div>
  </div>
</div>
</body>
</html>
```
FILE: styles.css
```css
* { box-sizing: border-box; }
body { margin: 0; width: 1920px; height: 1080px; overflow: hidden; background: #000; font: 14px "Liberation Sans", Arial, sans-serif; color: #000; }
.defs { position: absolute; }
i { font-style: normal; display: block; }
h2, h3, p { margin: 0; }
.screen { width: 1920px; height: 1080px; display: flex; flex-direction: column; }

/* menu bar */
.menubar { height: 31px; border-top: 1px solid #000; border-bottom: 1px solid #444; background: linear-gradient(#e6e6e6, #d6d6d6); display: flex; justify-content: space-between; flex: none; }
.menu { display: flex; align-items: center; gap: 24px; padding: 0 0 2px 11px; letter-spacing: .02px; }
.tools { display: flex; }
.tool { position: relative; width: 39px; border-left: 1px solid #555; box-shadow: inset 1px 1px #f4f4f4; display: flex; align-items: center; justify-content: center; gap: 2px; padding-bottom: 1px; }
.host { width: 167px; font: 13.500px "Noto Sans", sans-serif; color: #222; border-left-color: #333; }
.corner { position: absolute; right: 2px; top: 4px; border-top: 5px solid #000; border-left: 5px solid transparent; }
.caret { border-top: 5px solid #000; border-left: 3.500px solid transparent; border-right: 3.500px solid transparent; }
.caret.w { border-top-color: #fff; border-left-width: 4px; border-right-width: 4px; }

/* header */
.head { height: 89px; flex: none; background: linear-gradient(#d8d8d8, #a8a8a8); display: flex; align-items: flex-start; }
.brand { width: 170px; padding-top: 23px; height: 89px; }
.message { width: 1499px; height: 80px; margin-top: 4px; background: #fff; border: 1px solid #000; border-left: 0; }
.customer { width: 110px; margin: 4px 0 0 21px; height: 80px; }
.clock { flex: 1; display: flex; flex-direction: column; align-items: center; padding: 11px 5px 0 0; margin-left: -1px; font: 15.500px/20px "Noto Sans", sans-serif; color: #444; }
.clock b { font: bold 20px/22px "DejaVu Sans Condensed", "DejaVu Sans", sans-serif; font-stretch: condensed; color: #000; margin: 5px 0 0 3px; letter-spacing: -.5px; }

/* breadcrumb */
.crumbs { height: 41px; flex: none; border-top: 1px solid #000; border-bottom: 2px solid #000; background: linear-gradient(#636363, #343434); display: flex; color: #fff; font-size: 18px; position: relative; box-shadow: inset 0 1px #777; }
.back { width: 29px; border-right: 1px solid #111; display: flex; align-items: center; padding-left: 6px; background: #ffffff0d; }
.back svg { margin-left: -2px; }
.fwd { width: 34px; border-right: 1px solid #111; box-shadow: 1px 0 #777; }
.crumb { display: flex; align-items: center; position: relative; padding-top: 1px; }
.sep { position: absolute; right: -21px; top: 0; fill: none; stroke: #111; stroke-width: 1.200; }
.sep path { filter: drop-shadow(-1px 0 0 #777); }
.home { width: 44px; padding-left: 8px; }
.c1 { width: 105px; padding-left: 28px; }
.c2 { width: 91px; padding-left: 28px; }
.c3 { width: 117px; padding-left: 28px; }
.here { width: 221px; padding-left: 28px; font-weight: bold; letter-spacing: .25px; border-right: 1px solid #111; box-shadow: 1px 0 #777; }
.pills { position: absolute; right: 12px; top: 0; height: 36px; display: flex; align-items: center; }
.pill { height: 30px; border: 1px solid #050505; border-radius: 15px; background: linear-gradient(#505050, #1c1c1c); box-shadow: 0 1px #777; display: flex; align-items: center; font-size: 16px; white-space: nowrap; flex: none; }
.area { width: 65px; padding-left: 11px; gap: 2px; margin-right: 11px; }
.estop { width: 170px; margin: 0 13px 0 232px; justify-content: flex-end; padding-right: 10px; gap: 7px; }
.func { width: 150px; padding-left: 9px; gap: 7px; margin-right: 12px; }
.safe { width: 108px; padding-left: 10px; margin-top: -2px; }
.safe .lamps { margin: 0 5px 0 11px; }
.lamps { display: flex; gap: 1px; }
.lamps i { width: 6px; height: 14px; border: 1px solid #000; background: #3a3a3a; }
.lamps .g { background: #38d820; }
.lamps .r { background: #dc0000; }

/* body */
.main { height: 848px; flex: none; display: flex; background: #e4e4e4; }
.side { width: 175px; background: #cdcdcd; border-right: 1px solid #000; box-shadow: inset -4px 0 #cdcdcd, inset -5px 0 #000; padding-right: 5px; display: flex; flex-direction: column; }
.unit { height: 61px; padding-top: 7px; text-align: center; border-bottom: 1px solid #999; box-shadow: 0 1px #eee; display: flex; flex-direction: column; padding-right: 1px; }
.unit b { font-size: 19px; line-height: 24px; letter-spacing: .1px; }
.unit small { font-size: 14px; font-weight: bold; line-height: 16px; }
.grp { padding: 0 4px 0 5px; border-bottom: 1px solid #999; box-shadow: 0 1px #eee; display: flex; flex-direction: column; gap: 3px; flex: none; }
.first { height: 83px; gap: 0; }
.first h3 { height: 30px; font-size: 14px; line-height: 33px; text-align: center; letter-spacing: .1px; padding-right: 2px; }
.tight { height: 212px; padding-top: 5px; }
.tight p { padding-left: 4px; }
.last { height: 109px; padding-top: 5px; }
.val { height: 48px; border: 1px solid #aeaeae; background: #e4e4e4; flex: none; text-align: center; }
.val p { display: flex; justify-content: space-between; padding: 1px 4px 0 5px; line-height: 18px; }
.val b { display: block; font-size: 21px; line-height: 25px; padding-right: 4px; margin-top: -1px; letter-spacing: .1px; }
.sidefoot { margin: auto 9px 8px 11px; display: flex; flex-direction: column; gap: 4px; }
.preview { height: 110px; background: #fff; border: 1px solid #000; }
.btn { height: 27px; border: 1px solid #777; background: linear-gradient(#f0f0f0, #c4c4c4); box-shadow: inset 1px 1px #fafafa; display: flex; align-items: center; justify-content: center; position: relative; }
.sidefoot .btn { padding: 0 3px 2px 0; }
.rt { position: absolute; right: 4px; top: 8px; border-left: 4px solid #000; border-top: 4px solid transparent; border-bottom: 4px solid transparent; }

/* floor plan */
.plan { width: 1511px; position: relative; background: #e4e4e4; overflow: hidden; }
.floor { display: block; }
.floor .l { fill: none; stroke: #bababa; stroke-width: 1.700; }
.floor .m { fill: none; stroke: #adadad; stroke-width: 1.700; }
.floor .md { fill: none; stroke: #a0a0a0; stroke-width: 2.200; }
.floor .f { fill: #b0b0b0; }
.floor .d { fill: #989898; }
.floor .z { fill: none; stroke: #828282; stroke-width: 1; }
.floor .dash { stroke-dasharray: 12 2; }
.floor .door { fill: none; stroke: #8b8b8b; stroke-width: 1.800; }
.floor .stair { fill: none; stroke: #adadad; stroke-width: 10; stroke-dasharray: 1.700 2.100; }
.dz { position: absolute; width: 54px; height: 26px; border: 1px solid #707070; background: linear-gradient(#22b000, #145c10); box-shadow: inset 2px 2px #7cd070, inset -1px -1px #7b8f7b; color: #fff; line-height: 24px; text-align: center; font-size: 14px; }
.dz::after { content: ""; position: absolute; right: 2px; top: 3px; border-top: 5px solid #fff; border-left: 5px solid transparent; }
.dz.off { background: linear-gradient(#f6ee80, #d0c000); box-shadow: inset 2px 2px #fbf7c0, inset -1px -1px #a09a50; color: #111; }
.dz.off::after { border-top-color: #000; }

/* legend */
.right { width: 234px; border-left: 1px solid #666; background: #d9d9d9; padding: 10px 12px 10px 19px; display: flex; flex-direction: column; justify-content: space-between; }
.legend { border: 1px solid #a6a6a6; height: 545px; padding-left: 3px; }
.legend h2 { font-size: 15px; line-height: 16px; height: 16px; margin: -9px 0 6px -3px; padding: 0 1px; background: #d9d9d9; width: 55px; }
.lg { display: flex; align-items: center; gap: 7px; line-height: 18px; white-space: nowrap; letter-spacing: .08px; }
.up { margin-top: -4px; }
.door-row { height: 50px; }
.post { stroke: #8f8f8f; stroke-width: 3; }
.post.red { stroke: #e00000; }
.stop-row { height: 40px; }
.stop-row text { font: bold 10px "Liberation Sans", sans-serif; fill: #fff; }
.gap { margin-top: 15px; }
.gap7 { margin-top: 7px; }
.gap7 span { margin-top: -2px; }
.zone-row { height: 44px; }
.lock-row { height: 30.500px; }
.rbtns { display: flex; flex-direction: column; gap: 15px; padding: 0 11px 0 8px; }
.rbtns .btn { height: 26px; }

/* alarm line */
.alarm { height: 31px; flex: none; background: #f4f4f4; border-top: 1px solid #fff; display: flex; position: relative; box-shadow: inset 0 1px #000, inset 0 -1px #fff; }
.abolt { width: 59px; margin: 2px 0 0 2px; border-left: 1px solid #555; border-right: 1px solid #555; background: #e4e4e4; box-shadow: inset 1px 1px #fff; display: flex; align-items: center; justify-content: center; padding-right: 4px; position: relative; }
.abolt .corner { top: 2px; }
.arow { height: 26px; margin-top: 3px; width: 1857px; border: 1px solid #777; display: flex; background: #ff0; font-size: 19px; line-height: 22px; white-space: nowrap; overflow: hidden; letter-spacing: .15px; }
.arow span { border-left: 1px solid #b8b89a; padding-left: 2px; flex: none; overflow: hidden; height: 24px; }
.a1 { width: 107px; } .a2 { width: 115px; } .a3 { width: 59px; } .a4 { width: 1003px; } .a5 { width: 131px; } .a6 { width: 180px; }
.arow .a4 { letter-spacing: -.16px; }

/* footer */
.foot { height: 40px; flex: none; border-top: 1px solid #000; border-bottom: 1px solid #000; display: flex; color: #fff; background: linear-gradient(#5c5c5c, #333); }
.areas { display: flex; width: 374px; background: #222; }
.areas span { width: 73px; margin-right: 1px; background: linear-gradient(#6a6a6a, #505050); box-shadow: inset 1px 1px #808080; display: flex; align-items: center; justify-content: center; font-size: 18px; letter-spacing: -.3px; padding-right: 2px; }
.tabs { display: flex; }
.tabs span { width: 128px; border-right: 1px solid #111; background: linear-gradient(#606060, #343434); box-shadow: inset 1px 1px #787878; display: flex; align-items: center; justify-content: center; text-align: center; font-size: 16px; line-height: 17.500px; letter-spacing: -.05px; padding: 2px 2px 0 0; }
.tabs .on { background: linear-gradient(#383838, #151515); }
.fill { flex: 1; }
.ficons { display: flex; }
.ficons span { width: 59px; border-left: 1px solid #111; box-shadow: inset 1px 1px #787878; display: flex; align-items: center; justify-content: center; }

/* timer window */
.win { position: absolute; left: 1191px; top: 21px; width: 388px; height: 356px; border: 1px solid #999; background: #f0f0f0; box-shadow: 2px 4px 12px #0006; font-size: 11px; color: #000; }
.wtitle { height: 30px; background: #fff; display: flex; align-items: center; padding-left: 9px; color: #8c8c8c; font: 12px "Noto Sans", sans-serif; gap: 6px; }
.wtitle span { margin-top: -1px; }
.wtitle .ctl { margin-left: auto; margin-right: 15px; }
.wbody { padding: 12px 13px 0 11px; }
.wrow { display: flex; align-items: flex-start; padding-left: 2px; }
.inp { height: 20px; border: 1px solid #6a6a6a; background: #fff; padding-left: 2px; line-height: 18px; white-space: nowrap; overflow: hidden; letter-spacing: -.2px; }
.wb { height: 21px; border: 1px solid #adadad; background: #e1e1e1; text-align: center; line-height: 20px; letter-spacing: -.1px; }
.go { width: 53px; background: #e5f1fb; border-color: #0078d7; margin-right: 7px; }
.sql { width: 120px; margin-right: 7px; }
.rec { width: 73px; margin: 1px 7px 0 0; }
.db { width: 93px; }
.two { margin-top: 4px; }
.path { width: 180px; margin: 2px 7px 0 0; letter-spacing: -.05px; }
.std { width: 73px; margin: 1px 8px 0 0; }
.expo { width: 39px; margin-right: 7px; line-height: 19px; }
.toggle { position: relative; width: 41px; height: 13px; margin-top: 6px; background: #fff; border-radius: 7px; }
.toggle i { width: 24px; height: 24px; border-radius: 50%; background: #828282; position: absolute; left: 0; top: -6px; }
.tree { height: 191px; margin: 10px 0 0 1px; border: 1px solid #828790; background: #fff; padding: 1px 0 0 9px; }
.tree div { height: 16px; display: flex; align-items: center; letter-spacing: -.25px; }
.tree span { margin-left: 2px; }
.plus { width: 9px; height: 9px; border: 1px solid #999; margin-right: 5px; background: linear-gradient(#3a5090, #3a5090) 1px 3px/5px 1px no-repeat, linear-gradient(#3a5090, #3a5090) 3px 1px/1px 5px no-repeat, #f4f4f4; }
.cb { width: 13px; height: 13px; border: 1px solid #222; background: #fff; }
.cb.on::after { content: ""; display: block; width: 8px; height: 4px; margin: 2px 0 0 1px; border-left: 1.300px solid #333; border-bottom: 1.300px solid #333; transform: rotate(-47deg); }
.wfoot { display: flex; margin-top: 6px; gap: 5px; }
.log { width: 301px; height: 43px; border: 1px solid #828790; background: #fff; }
.opts { display: flex; flex-direction: column; gap: 13px; padding-top: 1px; }
.opts div { display: flex; gap: 6px; height: 13px; align-items: center; letter-spacing: -.1px; }
```
